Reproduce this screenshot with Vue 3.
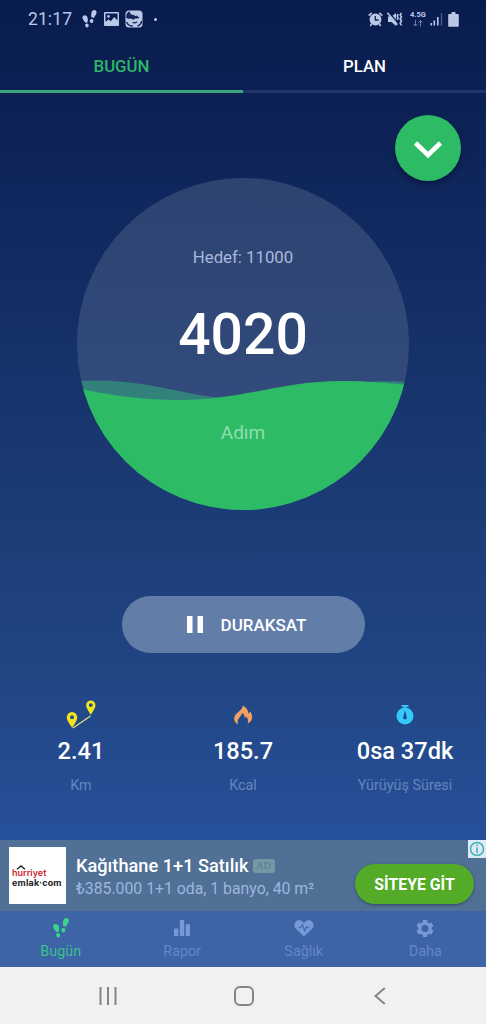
<script setup>
import { ref } from 'vue'

const tabs = ['BUGÜN', 'PLAN']
const activeTab = ref(0)

const goal = ref(11000)
const steps = ref(4020)

const stats = [
  { icon: 'route', value: '2.41', label: 'Km' },
  { icon: 'flame', value: '185.7', label: 'Kcal' },
  { icon: 'timer', value: '0sa 37dk', label: 'Yürüyüş Süresi' },
]

const navItems = [
  { icon: 'steps', label: 'Bugün' },
  { icon: 'chart', label: 'Rapor' },
  { icon: 'heart', label: 'Sağlık' },
  { icon: 'gear', label: 'Daha' },
]
const activeNav = ref(0)
</script>

<template>
  <div class="screen">
    <!-- shared footprints shape -->
    <svg class="defs" width="0" height="0">
      <symbol id="footprints" viewBox="0 0 16 20">
        <path
          d="M.8 6.600c1.700-1.500 4.300-.5 5 1.700.6 2 .2 3.200.3 5.200l-3 .8C2.600 12.200.7 11.200.3 9.300c-.2-1.100-.1-2.100.5-2.700z"
        />
        <ellipse cx="5.200" cy="17.200" rx="2" ry="2.300" transform="rotate(-12 5.200 17.200)" />
        <path
          d="M15.300.8c-1.700-1.500-4.300-.5-5 1.700-.6 2-.3 3.300-.3 5.500l3 .8c.5-2.100 2.300-3.200 2.700-5.200.2-1.100.2-2.200-.4-2.800z"
        />
        <ellipse cx="10.300" cy="12.200" rx="2" ry="2.200" transform="rotate(15 10.300 12.200)" />
      </symbol>
    </svg>

    <!-- status bar -->
    <header class="status">
      <span class="clock">21:17</span>
      <svg class="s-steps" width="15" height="18"><use href="#footprints" /></svg>
      <svg class="s-photo" width="15" height="14" viewBox="0 0 15 14">
        <path
          fill-rule="evenodd"
          d="M1 0h13a1 1 0 0 1 1 1v12a1 1 0 0 1-1 1H1a1 1 0 0 1-1-1V1a1 1 0 0 1 1-1zM1.500 1.500v8.500l3-2.800 2.300 2 3.400-4.200 3.300 3.600V1.500z"
        />
        <circle cx="4.500" cy="4.400" r="1.300" />
      </svg>
      <svg class="s-face" width="18" height="18" viewBox="0 0 18 18">
        <rect x="0.500" y="0.500" width="17" height="17" rx="3.500" />
        <path class="ink" d="M4.500 1.500C2 2.200 1 4.500 1.200 7.500c1.300 1.500 3 1.700 4.800.9 1.200 1.400 3.600 1.300 4.400-.2 1.600.7 3.300.2 4.100-1.300-1.300.3-2.200-.2-2.300-1.300-1.400.8-2.700.4-3.200-.8C7.500 5.200 5.200 4.500 4.500 1.500z" />
        <path class="line" d="M7.500 12.300c1.600.9 3.300.6 4.500-.5M1.500 12c1 2.600 3 4 6.500 4.200M16.800 11c-.5 2.500-2 4.300-4.300 5.200" />
      </svg>
      <span class="s-dot"></span>

      <div class="status-right">
        <svg width="15" height="15" viewBox="0 0 15 15">
          <circle cx="7.500" cy="7.500" r="5.900" />
          <path class="stroke" d="M.7 3.600 3.700.8M14.300 3.600l-3-2.800M3.600 12l-1.400 2M11.400 12l1.400 2" />
          <path class="line" d="M7.300 4v4h3.300" />
        </svg>
        <svg width="16" height="15" viewBox="0 0 16 15">
          <path d="M1 4.500h3.500L9 1v13l-4.500-4H1z" />
          <path class="slash" d="M1.500 0 11 11" />
          <path class="stroke" d="m.4.8 10 12" />
          <path class="stroke" d="m11.200 2-1 2 1 2-1 2M14.500 1l-1.300 2 1.300 2-1.300 2 1.300 2-1.300 2 1.300 2.500" />
        </svg>
        <div class="network">
          <span>4.5G</span>
          <svg width="10" height="7" viewBox="0 0 10 7">
            <path d="M2.500 0v6M.5 4l2 2 2-2M7.500 6.500v-6M5.500 2.500l2-2 2 2" />
          </svg>
        </div>
        <svg class="signal" width="13" height="14" viewBox="0 0 13 14">
          <path d="M.5 11h1.600v2.500H.5zM3.500 8.500h1.600v5H3.500zM7 5h1.600v8.500H7z" />
          <path class="dim" d="M10.800 1h1.400v12.500h-1.400z" />
        </svg>
        <svg class="battery" width="11" height="15" viewBox="0 0 11 15">
          <path d="M3.500 0h4v2H10a.8.8 0 0 1 .8.800v11.200a.8.8 0 0 1-.8.800H1a.8.8 0 0 1-.8-.8V2.800A.8.8 0 0 1 1 2h2.500z" />
        </svg>
      </div>
    </header>

    <!-- tabs -->
    <nav class="tabs">
      <button
        v-for="(tab, i) in tabs"
        :key="tab"
        class="tab"
        :class="{ 'tab--active': activeTab === i }"
        @click="activeTab = i"
      >
        {{ tab }}
      </button>
    </nav>

    <main class="main">
      <button class="fab">
        <svg width="30" height="20" viewBox="0 0 30 20">
          <path d="m2.500 3 12.500 12L27.500 3" />
        </svg>
      </button>

      <!-- step counter -->
      <div class="gauge">
        <svg class="wave" width="332" height="332" viewBox="0 0 332 332">
          <path
            class="wave-back"
            d="M0 203C45 200 82 209 112 215c38 8 75 8 110 0 36-8 65-14 110-11v128H0z"
          />
          <path
            class="wave-front"
            d="M0 210C35 218 67 222 102 222c66 0 100-19 164-19 25 0 42 2 66 4v125H0z"
          />
        </svg>
        <span class="goal">Hedef: {{ goal }}</span>
        <span class="count">{{ steps }}</span>
        <span class="unit">Adım</span>
      </div>

      <button class="pause">
        <svg width="16" height="17" viewBox="0 0 16 17"><path d="M0 0h5.500v17H0zM10.500 0H16v17h-5.500z" /></svg>
        <span>DURAKSAT</span>
      </button>

      <!-- stats -->
      <section class="stats">
        <div v-for="s in stats" :key="s.label" class="stat">
          <svg v-if="s.icon === 'route'" class="stat-icon" width="30" height="30" viewBox="0 0 30 30">
            <path class="route-line" d="m7 28 17.500-12" />
            <path
              class="route-pin"
              fill-rule="evenodd"
              d="M6 12a5.200 5.200 0 0 0-5.200 5.200C.8 21 4 24 6.200 28c2-4 5-7 5-10.800A5.200 5.200 0 0 0 6 12zm0 3.200a2 2 0 1 1 0 4 2 2 0 0 1 0-4z"
            />
            <path
              class="route-pin"
              fill-rule="evenodd"
              d="M24.800.5a4.600 4.600 0 0 0-4.600 4.600c0 3.400 2.600 6 4.600 10 2-4 4.600-6.600 4.600-10A4.600 4.600 0 0 0 24.800.5zm0 2.700a1.900 1.900 0 1 1 0 3.800 1.900 1.900 0 0 1 0-3.800z"
            />
          </svg>
          <svg v-else-if="s.icon === 'flame'" class="stat-icon" width="20" height="30" viewBox="0 0 20 30">
            <path
              class="flame"
              d="M9.700 5.500c.2 2.500-2 4.600-4.400 6.600C2.500 14.500.8 16.800 1.200 19.400c.3 2.300 1.900 3.900 4 4.600-1-2.600-.4-4.900 1.500-6.700 1.100-1.100 2-2.400 2.300-4.200 2 1.200 2.900 3 2.700 5l1.700-1.400c1.700 2 2.200 4.200 1.200 6.900 2.600-1 4.400-3.200 4.500-6 .1-2.400-.7-4.300-2-6.400-.2 1.300-.7 2-1.600 2.400C15.200 10.200 13 7 9.700 5.500z"
            />
          </svg>
          <svg v-else class="stat-icon" width="18" height="30" viewBox="0 0 18 30">
            <path class="timer" d="M5.500 5h7v1.800h-2.300v2H7.800v-2H5.500z" />
            <circle class="timer" cx="9" cy="16" r="8.500" />
            <path class="timer-hand" d="M9 10.200 7.300 17a1.800 1.800 0 1 0 3.400 0z" />
          </svg>
          <strong>{{ s.value }}</strong>
          <span>{{ s.label }}</span>
        </div>
      </section>
    </main>

    <!-- ad banner -->
    <aside class="ad">
      <div class="ad-logo">
        <svg width="10" height="5" viewBox="0 0 10 5"><path d="m1 4.200 4-3.200 4 3.200" /></svg>
        <span class="brand">hurriyet</span>
        <span class="brand-sub">emlak·com</span>
      </div>
      <div class="ad-text">
        <div class="ad-title">Kağıthane 1+1 Satılık <span class="ad-tag">AD</span></div>
        <div class="ad-desc">₺385.000 1+1 oda, 1 banyo, 40 m²</div>
      </div>
      <button class="ad-cta">SİTEYE GİT</button>
      <svg class="ad-info" width="18" height="18" viewBox="0 0 18 18">
        <circle cx="9" cy="9" r="6.500" />
        <path d="M9 4.500v1.800M9 7.600v5.600" />
      </svg>
    </aside>

    <!-- bottom navigation -->
    <nav class="bottom-nav">
      <button
        v-for="(item, i) in navItems"
        :key="item.label"
        class="nav-item"
        :class="{ 'nav-item--active': activeNav === i }"
        @click="activeNav = i"
      >
        <svg v-if="item.icon === 'steps'" width="16" height="20"><use href="#footprints" /></svg>
        <svg v-else-if="item.icon === 'chart'" width="16" height="20" viewBox="0 0 16 20">
          <path d="M0 10.500h4.300V18H0zM5.800 2h4.400v16H5.800zM11.700 6.200H16V18h-4.300z" />
        </svg>
        <svg v-else-if="item.icon === 'heart'" width="20" height="20" viewBox="0 0 20 20">
          <path d="M10 18.500 2 10.800C-2 6.500 2.500.5 7.200 2.800c1.300.6 2 1.500 2.800 2.500.8-1 1.500-1.900 2.800-2.500C17.500.5 22 6.500 18 10.800z" />
          <path class="pulse" d="M4.500 9.800h2.300l1.500-3 2.400 6 1.800-4 .8 1h2.200" />
        </svg>
        <svg v-else width="18" height="20" viewBox="0 0 18 20">
          <path
            fill-rule="evenodd"
            d="M7 2h4l.6 2.500 1.500.9 2.400-.8 2 3.500-1.900 1.700v1.500l1.900 1.700-2 3.400-2.400-.7-1.500.8L11 19H7l-.6-2.500-1.500-.8-2.400.7-2-3.400 1.900-1.700V9.800L.5 8.100l2-3.500 2.400.8 1.500-.9zm2 5a3.500 3.500 0 1 0 0 7 3.500 3.500 0 0 0 0-7z"
          />
        </svg>
        <span>{{ item.label }}</span>
      </button>
    </nav>

    <!-- android system keys -->
    <footer class="system">
      <svg width="18" height="18" viewBox="0 0 18 18"><path d="M1.500 0v18M9 0v18M16.500 0v18" /></svg>
      <svg width="20" height="20" viewBox="0 0 20 20">
        <rect x="1" y="1" width="18" height="18" rx="5" />
      </svg>
      <svg class="back" width="12" height="18" viewBox="0 0 12 18"><path d="M10.800 1 1.500 9l9.300 8" /></svg>
    </footer>
  </div>
</template>

<style>
body {
  margin: 0;
  background: #f1f1f1;
}
</style>

<style scoped>
* {
  box-sizing: border-box;
}

button {
  border: none;
  padding: 0;
  background: none;
  font: inherit;
  color: inherit;
  cursor: pointer;
}

.screen {
  width: 486px;
  height: 1024px;
  display: flex;
  flex-direction: column;
  overflow: hidden;
  font-family: Roboto, 'Noto Sans', sans-serif;
  color: #fff;
  background: linear-gradient(#091c4e 0, #0c2053 100px, #10295f 220px, #1a3972 470px, #214684 680px, #26509a 840px, #3c64a8 960px);
}

.defs {
  position: absolute;
}

/* Status bar */
.status {
  height: 38px;
  flex: none;
  display: flex;
  align-items: center;
  padding: 0 27px 0 28px;
  color: #bac7e6;
  fill: #bac7e6;
}
.clock {
  width: 45px;
  font-size: 17.5px;
  letter-spacing: 0.1px;
}
.s-steps {
  margin-left: 9px;
}
.s-photo {
  margin-left: 7px;
}
.s-face {
  margin-left: 6px;
}
.s-dot {
  width: 3px;
  height: 3px;
  margin-left: 11px;
  border-radius: 50%;
  background: #bac7e6;
}
.ink {
  fill: #14285a;
}
.line {
  fill: none;
  stroke: #14285a;
  stroke-width: 1.3;
}
.stroke {
  fill: none;
  stroke: #bac7e6;
  stroke-width: 1.6;
}
.slash {
  stroke: #0a1d4f;
  stroke-width: 1.4;
}
.status-right {
  margin-left: auto;
  display: flex;
  align-items: center;
  gap: 4px;
}
.network {
  width: 18px;
  margin-left: 2px;
  display: flex;
  flex-direction: column;
  align-items: center;
  font-size: 7.5px;
  font-weight: 700;
  line-height: 8px;
}
.network svg {
  margin-top: 1px;
  fill: none;
  stroke: #6f7ea9;
}
.signal {
  margin-left: -1px;
}
.dim {
  fill: #4a5b88;
}
.battery {
  margin-left: 1px;
}

/* Tabs */
.tabs {
  height: 55px;
  flex: none;
  display: flex;
}
.tab {
  flex: 1;
  padding-top: 3px;
  font-size: 16.8px;
  font-weight: 500;
  border-bottom: 3px solid #20336a;
}
.tab--active {
  color: #2eb768;
  border-bottom-color: #37a77c;
}

/* Main area */
.main {
  position: relative;
  height: 747px;
  flex: none;
  display: flex;
  flex-direction: column;
  align-items: center;
  padding-top: 85px;
}
.fab {
  position: absolute;
  top: 22px;
  right: 25px;
  width: 66px;
  height: 66px;
  display: flex;
  align-items: center;
  justify-content: center;
  border-radius: 50%;
  background: #2dbb66;
  box-shadow: 0 3px 5px rgba(0, 10, 40, 0.5);
}
.fab svg {
  margin-top: 3px;
  fill: none;
  stroke: #fff;
  stroke-width: 4.6;
}

.gauge {
  position: relative;
  width: 332px;
  height: 332px;
  flex: none;
  display: flex;
  flex-direction: column;
  align-items: center;
  border-radius: 50%;
  overflow: hidden;
  background: linear-gradient(#2d4370, #324b7c 65%);
}
.wave {
  position: absolute;
  inset: 0;
}
.wave-back {
  fill: #32817b;
}
.wave-front {
  fill: #2dbb66;
}
.gauge span {
  position: relative;
}
.goal {
  margin-top: 69px;
  font-size: 16.8px;
  line-height: 20px;
  color: #a9b7dc;
}
.count {
  margin-top: 36px;
  font-size: 57px;
  font-weight: 500;
  line-height: 64px;
}
.unit {
  margin-top: 54px;
  font-size: 19px;
  line-height: 24px;
  color: #8fdfae;
}

.pause {
  width: 243px;
  height: 57px;
  flex: none;
  margin-top: 86px;
  padding-left: 7px;
  display: flex;
  align-items: center;
  justify-content: center;
  gap: 18px;
  border-radius: 29px;
  font-size: 17px;
  font-weight: 500;
  background: #637da9;
}
.pause svg {
  fill: #fff;
}

.stats {
  width: 100%;
  margin-top: 47px;
  display: grid;
  grid-template-columns: repeat(3, 1fr);
}
.stat {
  display: flex;
  flex-direction: column;
  align-items: center;
}
.stat strong {
  margin-top: 7px;
  font-size: 23.6px;
  font-weight: 500;
  line-height: 28px;
}
.stat span {
  margin-top: 12px;
  font-size: 14.4px;
  line-height: 18px;
  color: #6685bc;
}
.route-pin {
  fill: #f5e51c;
}
.route-line {
  stroke: #d9de73;
  stroke-width: 1.4;
}
.flame {
  fill: #f3a064;
}
.timer {
  fill: #36c8f8;
}
.timer-hand {
  fill: #1d4b8b;
}

/* Ad banner */
.ad {
  position: relative;
  height: 71px;
  flex: none;
  display: flex;
  padding: 7px 12px 0 9px;
  background: #507096;
}
.ad-logo {
  width: 57px;
  height: 57px;
  flex: none;
  padding-top: 18px;
  display: flex;
  flex-direction: column;
  background: #fff;
  font-family: Inter, Roboto, sans-serif;
}
.ad-logo svg {
  margin: 0 0 -3px 7px;
  fill: none;
  stroke: #222;
  stroke-width: 1.4;
}
.brand {
  margin-left: 3px;
  font-size: 9px;
  font-weight: 600;
  line-height: 11px;
  color: #d2232e;
}
.brand-sub {
  margin-left: 3px;
  font-size: 9px;
  font-weight: 700;
  line-height: 9px;
  letter-spacing: 0.2px;
  white-space: nowrap;
  color: #222;
}
.ad-text {
  margin-left: 10px;
  flex: 1;
  white-space: nowrap;
}
.ad-title {
  margin-top: 8px;
  display: flex;
  align-items: center;
  gap: 4px;
  font-size: 18.2px;
  font-weight: 500;
  line-height: 22px;
}
.ad-tag {
  width: 22px;
  height: 14px;
  border-radius: 3px;
  font-family: 'Liberation Serif', serif;
  font-size: 10px;
  line-height: 14px;
  text-align: center;
  color: #55798f;
  background: #7499a5;
}
.ad-desc {
  margin-top: 2px;
  font-size: 15.8px;
  line-height: 20px;
  color: #9db6de;
}
.ad-cta {
  width: 119px;
  height: 40px;
  flex: none;
  margin-top: 17px;
  border-radius: 20px;
  font-size: 15.8px;
  font-weight: 700;
  background: #53ab27;
  box-shadow: 0 1px 3px rgba(20, 50, 60, 0.6);
}
.ad-info {
  position: absolute;
  top: 0;
  right: 0;
  background: #dfe9f7;
  fill: none;
  stroke: #3fb3b6;
  stroke-width: 1.5;
}

/* Bottom navigation */
.bottom-nav {
  height: 56px;
  flex: none;
  display: grid;
  grid-template-columns: repeat(4, 1fr);
  background: #3c64a7;
}
.nav-item {
  display: flex;
  flex-direction: column;
  align-items: center;
  padding-top: 7px;
  font-size: 14.4px;
  line-height: 18px;
  color: #6487c6;
  fill: #769ad8;
}
.nav-item span {
  margin-top: 5px;
}
.nav-item--active {
  color: #3dc08a;
  fill: #3ed58a;
}
.pulse {
  fill: none;
  stroke: #3c64a7;
  stroke-width: 1.1;
}

/* System keys */
.system {
  flex: 1;
  display: flex;
  align-items: center;
  padding-left: 99px;
  gap: 117px;
  background: #f1f1f1;
}
.system svg {
  fill: none;
  stroke: #858585;
  stroke-width: 2;
}
.system .back {
  margin-left: 3px;
}
</style>
